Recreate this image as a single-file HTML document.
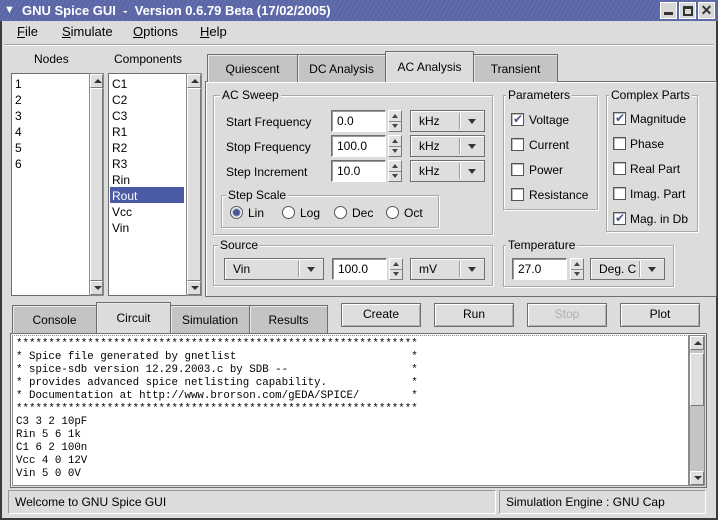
<!DOCTYPE html>
<html><head><meta charset="utf-8"><style>
*{box-sizing:border-box;margin:0;padding:0}
body{width:718px;height:520px;overflow:hidden;background:#dcdcdc;font-family:"Liberation Sans",sans-serif;font-size:12px;color:#000;position:relative}
.a{position:absolute}
.t{position:absolute;white-space:nowrap;line-height:14px}
.entry{position:absolute;background:#fff;border:1px solid;border-color:#6e6e6e #fff #fff #6e6e6e;box-shadow:inset 1px 1px 0 #9a9a9a;padding:3px 0 0 5px;line-height:15px}
.spin{position:absolute;width:14px;border:1px solid;border-color:#fff #7a7a7a #7a7a7a #fff;background:#e2e2e2}
.spin:after{content:"";position:absolute;left:0;right:0;top:50%;border-top:1px solid #8a8a8a}
.spin i,.spin b{position:absolute;left:3px;width:0;height:0;border-left:3px solid transparent;border-right:3px solid transparent}
.spin i{top:3px;border-bottom:4px solid #444}
.spin b{bottom:3px;border-top:4px solid #444}
.combo{position:absolute;border:1px solid #6e6e6e;background:#dedede;box-shadow:inset 1px 1px 0 #fff;padding:3px 0 0 8px;line-height:14px}
.combo:after{content:"";position:absolute;right:24px;top:2px;bottom:2px;border-left:1px solid #9a9a9a;box-shadow:1px 0 0 #fff}
.combo i{position:absolute;right:8px;top:8px;border-left:4px solid transparent;border-right:4px solid transparent;border-top:5px solid #333}
.frame{position:absolute;border:1px solid #a8a8a8;box-shadow:1px 1px 0 #fff inset,1px 1px 0 #fff}
.flab{position:absolute;top:-8px;left:6px;background:#dcdcdc;padding:0 2px;line-height:14px;white-space:nowrap}
.cb{position:absolute;width:13px;height:13px;background:#fff;border:1px solid #555;box-shadow:inset 1px 1px 0 #bbb}
.cb.on:after{content:"✔";position:absolute;left:1px;top:-2px;color:#4a5593;font-size:12px;line-height:14px}
.rad{position:absolute;width:13px;height:13px;border-radius:50%;background:#fff;border:1px solid #555}
.rad.on{background:radial-gradient(circle,#4a5593 0 3px,#9aa0c8 3.5px,#fff 5px)}
.tab{position:absolute;background:#c4c4c4;border:1px solid #6e6e6e;border-bottom:none;box-shadow:inset 1px 1px 0 #e8e8e8;text-align:center;line-height:14px}
.tab.act{background:#dcdcdc}
.btn{position:absolute;border:1px solid #6e6e6e;background:#dedede;box-shadow:inset 1px 1px 0 #fff,inset -1px -1px 0 #b0b0b0;text-align:center;line-height:20px}
.vs{position:absolute;background:#c4c4c4;border:1px solid #8a8a8a}
.arw{position:absolute;left:0;right:0;height:14px;background:#dedede;border:1px solid;border-color:#fff #7a7a7a #7a7a7a #fff}
.up:after,.dn:after{content:"";position:absolute;left:3px;border-left:4px solid transparent;border-right:4px solid transparent}
.up:after{top:4px;border-bottom:4px solid #333}
.dn:after{top:4px;border-top:4px solid #333}
.mono{font-family:"Liberation Mono",monospace;font-size:10.8px;line-height:13px;white-space:pre}
</style></head><body>
<div class="a" style="left:0;top:0;width:718px;height:520px;border:2px solid #3a3a3a;border-top:none"></div>
<div class="a" style="left:0;top:0;width:718px;height:21px;background:repeating-linear-gradient(120deg,#5a66a6 0 3px,#6672b0 3px 4px);"></div>
<div class="a" style="left:4px;top:5px;width:10px;height:10px;font-size:11px;color:#fff;line-height:10px">&#9660;</div>
<div class="t" style="left:22px;top:3px;color:#fff;font-weight:bold;font-size:13px;line-height:16px">GNU Spice GUI &nbsp;- &nbsp;Version 0.6.79 Beta (17/02/2005)</div>
<div class="a" style="left:660px;top:2px;width:17px;height:17px;background:#d8d8d8;border:1px solid #fff"><div class="a" style="left:3px;top:9px;width:9px;height:3px;background:#333"></div></div>
<div class="a" style="left:679px;top:2px;width:17px;height:17px;background:#d8d8d8;border:1px solid #fff"><div class="a" style="left:3px;top:3px;width:10px;height:10px;border:2px solid #333;border-top-width:3px"></div></div>
<div class="a" style="left:698px;top:2px;width:17px;height:17px;background:#d8d8d8;border:1px solid #fff;font-weight:bold;font-size:14px;line-height:15px;text-align:center;color:#333">✕</div>
<div class="t" style="left:17px;top:25px;font-size:13px"><u>F</u>ile</div>
<div class="t" style="left:62px;top:25px;font-size:13px"><u>S</u>imulate</div>
<div class="t" style="left:133px;top:25px;font-size:13px"><u>O</u>ptions</div>
<div class="t" style="left:200px;top:25px;font-size:13px"><u>H</u>elp</div>
<div class="a" style="left:4px;top:44px;width:710px;height:2px;border-top:1px solid #a8a8a8;border-bottom:1px solid #fff"></div>
<div class="t" style="left:34px;top:52px">Nodes</div>
<div class="t" style="left:114px;top:52px">Components</div>
<div class="a" style="left:11px;top:73px;width:93px;height:223px;border:1px solid #6e6e6e;background:#fff"></div>
<div class="vs" style="left:89px;top:73px;width:15px;height:223px"><div class="arw up" style="top:0"></div><div class="arw dn" style="bottom:0"></div><div class="a" style="left:0;right:0;top:14px;height:193px;background:#dedede;border:1px solid;border-color:#fff #7a7a7a #7a7a7a #fff"></div></div>
<div class="t" style="left:15px;top:76px;line-height:16px">1<br>2<br>3<br>4<br>5<br>6</div>
<div class="a" style="left:108px;top:73px;width:94px;height:223px;border:1px solid #6e6e6e;background:#fff"></div>
<div class="vs" style="left:186px;top:73px;width:16px;height:223px"><div class="arw up" style="top:0"></div><div class="arw dn" style="bottom:0"></div><div class="a" style="left:0;right:0;top:14px;height:193px;background:#dedede;border:1px solid;border-color:#fff #7a7a7a #7a7a7a #fff"></div></div>
<div class="a" style="left:110px;top:187px;width:74px;height:16px;background:#4a5aa5"></div>
<div class="t" style="left:112px;top:76px;line-height:16px">C1<br>C2<br>C3<br>R1<br>R2<br>R3<br>Rin<br><span style="color:#fff">Rout</span><br>Vcc<br>Vin</div>
<div class="a" style="left:205px;top:81px;width:512px;height:216px;border:1px solid #6e6e6e;box-shadow:inset 1px 1px 0 #fff"></div>
<div class="tab" style="left:207px;top:54px;width:91px;height:28px;padding-top:7px">Quiescent</div>
<div class="tab" style="left:297px;top:54px;width:89px;height:28px;padding-top:7px">DC Analysis</div>
<div class="tab act" style="left:385px;top:51px;width:89px;height:31px;padding-top:8px">AC Analysis</div>
<div class="tab" style="left:473px;top:54px;width:85px;height:28px;padding-top:7px">Transient</div>
<div class="frame" style="left:213px;top:95px;width:280px;height:140px"><div class="flab">AC Sweep</div></div>
<div class="t" style="left:226px;top:115px">Start Frequency</div>
<div class="t" style="left:226px;top:140px">Stop Frequency</div>
<div class="t" style="left:226px;top:165px">Step Increment</div>
<div class="entry" style="left:331px;top:110px;width:55px;height:22px">0.0</div>
<div class="entry" style="left:331px;top:135px;width:55px;height:22px">100.0</div>
<div class="entry" style="left:331px;top:160px;width:55px;height:22px">10.0</div>
<div class="spin" style="left:388px;top:110px;height:22px"><i></i><b></b></div>
<div class="spin" style="left:388px;top:135px;height:22px"><i></i><b></b></div>
<div class="spin" style="left:388px;top:160px;height:22px"><i></i><b></b></div>
<div class="combo" style="left:410px;top:110px;width:75px;height:22px">kHz<i></i></div>
<div class="combo" style="left:410px;top:135px;width:75px;height:22px">kHz<i></i></div>
<div class="combo" style="left:410px;top:160px;width:75px;height:22px">kHz<i></i></div>
<div class="frame" style="left:221px;top:195px;width:218px;height:33px"><div class="flab" style="left:4px">Step Scale</div></div>
<div class="rad on" style="left:230px;top:206px"></div><div class="t" style="left:248px;top:206px">Lin</div>
<div class="rad" style="left:282px;top:206px"></div><div class="t" style="left:300px;top:206px">Log</div>
<div class="rad" style="left:334px;top:206px"></div><div class="t" style="left:352px;top:206px">Dec</div>
<div class="rad" style="left:386px;top:206px"></div><div class="t" style="left:404px;top:206px">Oct</div>
<div class="frame" style="left:213px;top:245px;width:280px;height:41px"><div class="flab" style="left:4px">Source</div></div>
<div class="combo" style="left:224px;top:258px;width:100px;height:22px">Vin<i></i></div>
<div class="entry" style="left:332px;top:258px;width:55px;height:22px">100.0</div>
<div class="spin" style="left:389px;top:258px;height:22px"><i></i><b></b></div>
<div class="combo" style="left:410px;top:258px;width:75px;height:22px">mV<i></i></div>
<div class="frame" style="left:503px;top:95px;width:95px;height:115px"><div class="flab" style="left:2px">Parameters</div></div>
<div class="cb on" style="left:511px;top:113px"></div><div class="t" style="left:529px;top:113px">Voltage</div>
<div class="cb" style="left:511px;top:138px"></div><div class="t" style="left:529px;top:138px">Current</div>
<div class="cb" style="left:511px;top:163px"></div><div class="t" style="left:529px;top:163px">Power</div>
<div class="cb" style="left:511px;top:188px"></div><div class="t" style="left:529px;top:188px">Resistance</div>
<div class="frame" style="left:606px;top:95px;width:92px;height:137px"><div class="flab" style="left:2px">Complex Parts</div></div>
<div class="cb on" style="left:613px;top:112px"></div><div class="t" style="left:630px;top:112px">Magnitude</div>
<div class="cb" style="left:613px;top:137px"></div><div class="t" style="left:630px;top:137px">Phase</div>
<div class="cb" style="left:613px;top:162px"></div><div class="t" style="left:630px;top:162px">Real Part</div>
<div class="cb" style="left:613px;top:187px"></div><div class="t" style="left:630px;top:187px">Imag. Part</div>
<div class="cb on" style="left:613px;top:212px"></div><div class="t" style="left:630px;top:212px">Mag. in Db</div>
<div class="frame" style="left:503px;top:245px;width:171px;height:42px"><div class="flab" style="left:2px">Temperature</div></div>
<div class="entry" style="left:512px;top:258px;width:55px;height:22px">27.0</div>
<div class="spin" style="left:570px;top:258px;height:22px"><i></i><b></b></div>
<div class="combo" style="left:590px;top:258px;width:75px;height:22px">Deg. C<i></i></div>
<div class="tab" style="left:12px;top:305px;width:85px;height:29px;padding-top:7px">Console</div>
<div class="tab act" style="left:96px;top:302px;width:75px;height:32px;padding-top:8px">Circuit</div>
<div class="tab" style="left:170px;top:305px;width:80px;height:29px;padding-top:7px">Simulation</div>
<div class="tab" style="left:249px;top:305px;width:79px;height:29px;padding-top:7px">Results</div>
<div class="btn" style="left:341px;top:303px;width:80px;height:24px">Create</div>
<div class="btn" style="left:434px;top:303px;width:80px;height:24px">Run</div>
<div class="btn" style="left:527px;top:303px;width:80px;height:24px;color:#b0b0b0">Stop</div>
<div class="btn" style="left:620px;top:303px;width:80px;height:24px">Plot</div>
<div class="a" style="left:10px;top:333px;width:697px;height:155px;border:1px solid #6e6e6e;box-shadow:inset 1px 1px 0 #fff"></div>
<div class="a" style="left:12px;top:335px;width:677px;height:151px;background:#fff;border:1px solid #8a8a8a;border-top:1px dotted #888"></div>
<div class="vs" style="left:689px;top:335px;width:16px;height:151px"><div class="arw up" style="top:0"></div><div class="arw dn" style="bottom:0"></div><div class="a" style="left:0;right:0;top:17px;height:53px;background:#dedede;border:1px solid;border-color:#fff #7a7a7a #7a7a7a #fff"></div></div>
<div class="a mono" style="left:16px;top:338px">**************************************************************
* Spice file generated by gnetlist                           *
* spice-sdb version 12.29.2003.c by SDB --                   *
* provides advanced spice netlisting capability.             *
* Documentation at http://www.brorson.com/gEDA/SPICE/        *
**************************************************************
C3 3 2 10pF
Rin 5 6 1k
C1 6 2 100n
Vcc 4 0 12V
Vin 5 0 0V</div>
<div class="a" style="left:8px;top:490px;width:488px;height:24px;border:1px solid;border-color:#9a9a9a #fff #fff #9a9a9a"></div>
<div class="t" style="left:15px;top:495px">Welcome to GNU Spice GUI</div>
<div class="a" style="left:499px;top:490px;width:207px;height:24px;border:1px solid;border-color:#9a9a9a #fff #fff #9a9a9a"></div>
<div class="t" style="left:506px;top:495px">Simulation Engine : GNU Cap</div>
</body></html>
